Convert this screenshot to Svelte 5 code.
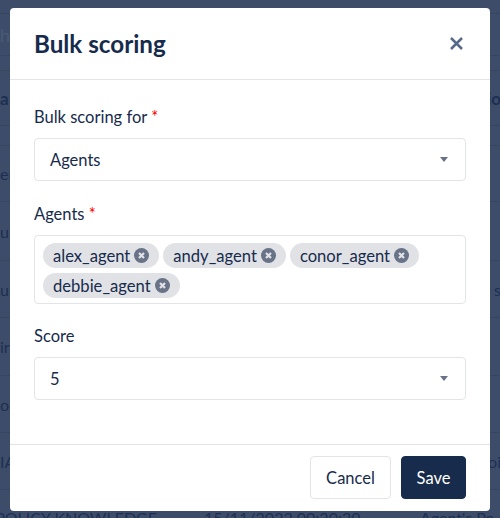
<script>
  const agents = ['alex_agent', 'andy_agent', 'conor_agent', 'debbie_agent'];
  const rows = [
    { h: 14, a: '', d: '' },
    { h: 42, a: 'h', d: '', faint: true },
    { h: 15, a: '', d: '' },
    { h: 55, a: 'a', d: 'io', bold: true },
    { h: 20, a: '', d: '' },
    { h: 56, a: 'er', d: '' },
    { h: 59, a: 'u', d: '' },
    { h: 57, a: 'u', d: 'n s' },
    { h: 58, a: 'ir', d: '' },
    { h: 57, a: 'op', d: '' },
    { h: 57, a: 'IA', d: 'oi' }
  ];
</script>

<div class="page">
  <div class="table">
    {#each rows as r}
      <div class="row" class:bold={r.bold} class:faint={r.faint} style:height="{r.h}px">
        <span>{r.a}</span>
        <span class="end">{r.d}</span>
      </div>
    {/each}
    <div class="row last">
      <span class="pk">POLICY KNOWLEDGE</span>
      <span class="dt">15/11/2022 00:20:20</span>
      <span class="pr">Agent's Po</span>
    </div>
  </div>

  <div class="modal">
    <header>
      <h2>Bulk scoring</h2>
      <svg class="close" width="13" height="13" viewBox="0 0 13 13" aria-label="Close">
        <path d="M1 1 L12 12 M12 1 L1 12" stroke="#56698b" stroke-width="2.5" fill="none" />
      </svg>
    </header>

    <div class="body">
      <div class="field">
        <span class="label">Bulk scoring for <em>*</em></span>
        <div class="select">
          <span>Agents</span>
          <i class="caret"></i>
        </div>
      </div>

      <div class="field">
        <span class="label">Agents <em>*</em></span>
        <div class="multi">
          {#each agents as a}
            <span class="chip">
              <span class="chip-text">{a}</span>
              <svg width="15" height="15" viewBox="0 0 15 15">
                <circle cx="7.5" cy="7.5" r="7.5" fill="#687387" />
                <path d="M5 5 L10 10 M10 5 L5 10" stroke="#e1e2e6" stroke-width="2.2" fill="none" />
              </svg>
            </span>
          {/each}
        </div>
      </div>

      <div class="field">
        <span class="label">Score</span>
        <div class="select">
          <span>5</span>
          <i class="caret"></i>
        </div>
      </div>
    </div>

    <footer>
      <button class="cancel">Cancel</button>
      <button class="save">Save</button>
    </footer>
  </div>
</div>

<style>
  :global(body) {
    margin: 0;
  }
  .page {
    position: relative;
    width: 500px;
    height: 518px;
    overflow: hidden;
    background: #3d4d69;
    font-family: Lato, sans-serif;
    color: #172b4d;
  }
  .table {
    display: flex;
    flex-direction: column;
    font-size: 16px;
    color: #1d2f52;
  }
  .row {
    box-sizing: border-box;
    flex: none;
    display: flex;
    justify-content: space-between;
    align-items: center;
    border-bottom: 1px solid #36465f;
    white-space: nowrap;
  }
  .row.bold {
    font-weight: 700;
    font-size: 17px;
  }
  .row.faint {
    color: #4a5a76;
    font-size: 18px;
  }
  .end {
    margin-right: -1px;
  }
  .row.last {
    justify-content: flex-start;
    height: 57px;
    padding-bottom: 3px;
    border: 0;
  }
  .pk {
    flex: none;
    width: 157px;
    display: flex;
    justify-content: flex-end;
  }
  .dt {
    flex: none;
    margin-left: 47px;
    width: 216px;
  }
  .pr {
    flex: none;
  }
  .modal {
    position: absolute;
    left: 10px;
    top: 8px;
    width: 480px;
    height: 503px;
    background: #fff;
    border-radius: 4px;
    display: flex;
    flex-direction: column;
  }
  header {
    box-sizing: border-box;
    flex: none;
    height: 72px;
    padding: 0 27px 0 24px;
    display: flex;
    align-items: center;
    justify-content: space-between;
    border-bottom: 1px solid #e2e4e8;
  }
  h2 {
    margin: 0;
    font-size: 24.2px;
    line-height: 30px;
    font-weight: 700;
    color: #172b4d;
  }
  .body {
    flex: 1;
    padding: 24px 24px 0;
    display: flex;
    flex-direction: column;
    gap: 19.5px;
  }
  .field {
    display: flex;
    flex-direction: column;
    gap: 8px;
  }
  .label {
    font-size: 16.5px;
    line-height: 26px;
    color: #172b4d;
  }
  .label em {
    color: #f00;
    font-style: normal;
  }
  .select {
    box-sizing: border-box;
    height: 43px;
    padding: 0 17px 0 15px;
    display: flex;
    align-items: center;
    justify-content: space-between;
    border: 1px solid #e2e4e8;
    border-radius: 4px;
    font-size: 16.5px;
  }
  .caret {
    width: 0;
    height: 0;
    border-left: 4.5px solid transparent;
    border-right: 4.5px solid transparent;
    border-top: 5px solid #687387;
  }
  .multi {
    box-sizing: border-box;
    height: 69px;
    padding: 7px 8px;
    display: flex;
    flex-wrap: wrap;
    align-content: flex-start;
    gap: 5px 4px;
    border: 1px solid #e2e4e8;
    border-radius: 4px;
  }
  .chip {
    box-sizing: border-box;
    height: 25px;
    padding: 0 10px;
    display: inline-flex;
    align-items: center;
    gap: 4px;
    border-radius: 13px;
    background: #e1e2e6;
    font-size: 16.6px;
  }
  .chip-text {
    padding-top: 2px;
  }
  footer {
    box-sizing: border-box;
    flex: none;
    height: 67px;
    padding: 11px 24px 0;
    display: flex;
    justify-content: flex-end;
    gap: 10px;
    border-top: 1px solid #e2e4e8;
  }
  button {
    box-sizing: border-box;
    height: 43px;
    border-radius: 4px;
    font-family: inherit;
    font-size: 16.5px;
  }
  .cancel {
    width: 81px;
    background: #fff;
    border: 1px solid #e2e4e8;
    color: #172b4d;
  }
  .save {
    width: 65px;
    background: #172b4d;
    border: 1px solid #172b4d;
    color: #fff;
  }
</style>
